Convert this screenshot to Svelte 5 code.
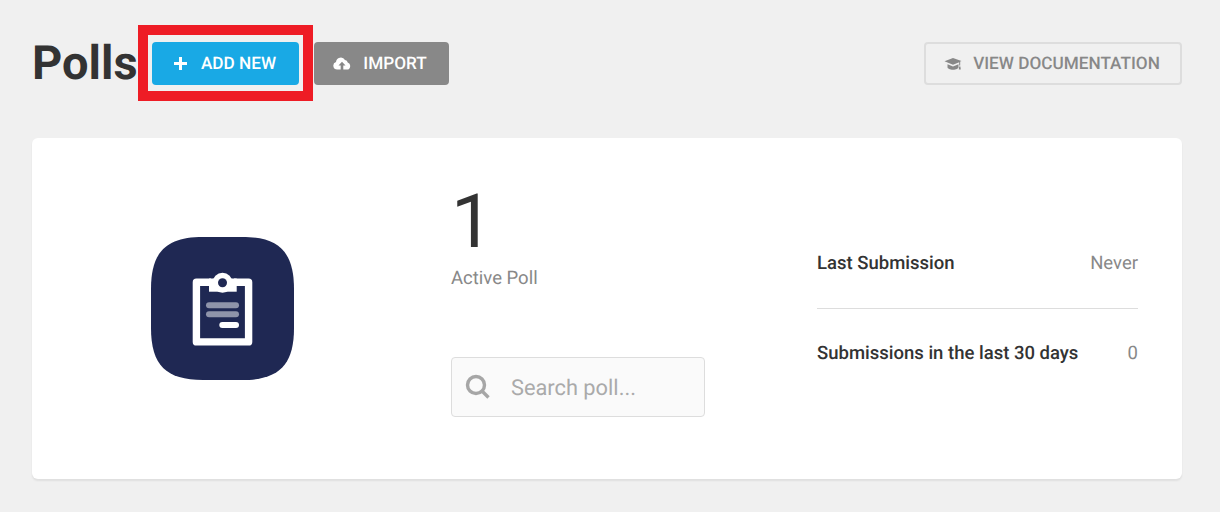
<script>
  const rows = [
    { label: 'Last Submission', value: 'Never' },
    { label: 'Submissions in the last 30 days', value: '0' }
  ];
</script>

<div class="page">
  <header class="head">
    <h1>Polls</h1>
    <div class="highlighted">
      <button class="btn blue">
        <svg class="plus" width="13" height="13" viewBox="0 0 13 13"><path d="M6.500 0v13M0 6.500h13" stroke="#fff" stroke-width="3" fill="none"/></svg>
        ADD NEW
      </button>
      <span class="redbox"></span>
    </div>
    <button class="btn gray">
      <svg width="18" height="13" viewBox="0 0 18 13"><path fill="#fff" fill-rule="evenodd" d="M4.2 12.6A3.9 3.9 0 0 1 3 5a4.8 4.8 0 0 1 9-1.9A3 3 0 0 1 14.700 5.600 3.600 3.600 0 0 1 14 12.600H10.300V8.600H12.500L9 4.800 5.500 8.600H7.700V12.600Z"/></svg>
      IMPORT
    </button>
    <button class="btn ghost">
      <svg width="18" height="14" viewBox="0 0 18 14"><path fill="#888" d="M9 1 .5 4.300 9 7.700l6.200-2.500v3.300h1V4.600l1.300-.5Z"/><path fill="#888" d="M3.500 7.300v2.900c0 1.300 2.500 2.500 5.500 2.500s5.500-1.200 5.500-2.500V7.300L9 9.500ZM15.200 9.500h1.200l.4 3h-2Z"/></svg>
      VIEW DOCUMENTATION
    </button>
  </header>

  <section class="card">
    <div class="logo">
      <svg width="143" height="143" viewBox="0 0 143 143">
        <path fill="#1f2853" d="M52 0H91C128 0 143 15 143 52V91C143 128 128 143 91 143H52C15 143 0 128 0 91V52C0 15 15 0 52 0Z"/>
        <path fill="none" stroke="#fff" stroke-width="7.400" stroke-linejoin="round" d="M60 45.200H45.400V104.900H97.600V45.200H83"/>
        <rect x="58" y="41.500" width="27.700" height="13.200" fill="#fff"/>
        <circle cx="71.500" cy="45.700" r="10" fill="#fff"/>
        <circle cx="71.500" cy="45.700" r="4.500" fill="#1f2853"/>
        <rect x="55" y="65.300" width="33" height="6" rx="3" fill="#fff" opacity=".5"/>
        <rect x="55" y="74.300" width="33" height="6" rx="3" fill="#fff" opacity=".5"/>
        <rect x="68.300" y="85" width="19.700" height="6" rx="3" fill="#fff"/>
      </svg>
    </div>
    <div class="mid">
      <div class="count">1</div>
      <div class="sub">Active Poll</div>
      <label class="search">
        <svg width="26" height="26" viewBox="0 0 26 26"><circle cx="11" cy="11" r="8.500" fill="none" stroke="#a6a6a6" stroke-width="3.400"/><path d="m17 17 6.500 6.500" stroke="#a6a6a6" stroke-width="3.400" fill="none"/></svg>
        <input placeholder="Search poll..." />
      </label>
    </div>
    <div class="stats">
      {#each rows as r}
        <div class="row"><span class="k">{r.label}</span><span class="v">{r.value}</span></div>
      {/each}
    </div>
  </section>
</div>

<style>
  :global(body) { margin: 0; background: #f0f0f0; }
  .page { width: 1220px; height: 512px; box-sizing: border-box; padding: 42px 38px 0 32px; background: #f0f0f0; font-family: Roboto, "Liberation Sans", sans-serif; overflow: hidden; text-rendering: geometricPrecision; }
  .head { display: flex; align-items: center; height: 43px; margin-bottom: 53px; }
  h1 { margin: 0 16px 0 0; font-size: 47px; line-height: 43px; width: 104px; font-weight: 700; color: #333; white-space: nowrap; }
  .btn { display: inline-flex; align-items: center; justify-content: center; height: 43px; box-sizing: border-box; border: 0; border-radius: 4px; font: 500 17.2px Roboto, sans-serif; text-rendering: geometricPrecision; color: #fff; padding: 0; }
  .highlighted { position: relative; display: flex; margin-right: 15px; }
  .blue { width: 147px; background: #19a9e5; gap: 14px; padding-right: 1px; }
  .gray { width: 135px; background: #888; gap: 12px; padding-right: 3px; }
  .ghost { width: 258px; margin-left: auto; background: transparent; border: 2px solid #ddd; color: #888; gap: 11px; padding-right: 2px; }
  .redbox { position: absolute; left: -14px; top: -17px; width: 175px; height: 76px; box-sizing: border-box; border: 10px solid #ee1c25; pointer-events: none; }
  .card { display: flex; width: 1150px; height: 341px; background: #fff; border-radius: 6px; box-shadow: 0 2px 2px rgba(0,0,0,.07); box-sizing: border-box; }
  .logo { width: 381px; flex: none; display: flex; align-items: center; justify-content: center; }
  .logo svg { display: block; }
  .mid { margin-left: 38px; width: 254px; flex: none; padding-top: 54px; }
  .count { font-size: 75px; line-height: 60px; font-weight: 400; color: #333; }
  .sub { font-size: 18.500px; line-height: 22px; color: #888; margin-top: 15px; }
  .search { display: flex; align-items: center; box-sizing: border-box; width: 254px; height: 60px; margin-top: 68px; padding-left: 13px; border: 1px solid #ddd; border-radius: 4px; background: #fafafa; gap: 20px; }
  .search input { border: 0; background: transparent; outline: 0; font: 400 21.800px Roboto, sans-serif; text-rendering: geometricPrecision; width: 190px; padding: 2px 0 0; color: #333; }
  .search input::placeholder { color: #aaa; opacity: 1; }
  .stats { margin-left: 112px; width: 321px; flex: none; padding-top: 80px; }
  .row { display: flex; justify-content: space-between; align-items: center; height: 90px; box-sizing: border-box; font-size: 18.500px; }
  .row:first-child { height: 91px; border-bottom: 1px solid #ddd; }
  .row:last-child { padding-bottom: 2px; }
  .k { font-weight: 500; color: #333; }
  .v { color: #888; }
</style>
